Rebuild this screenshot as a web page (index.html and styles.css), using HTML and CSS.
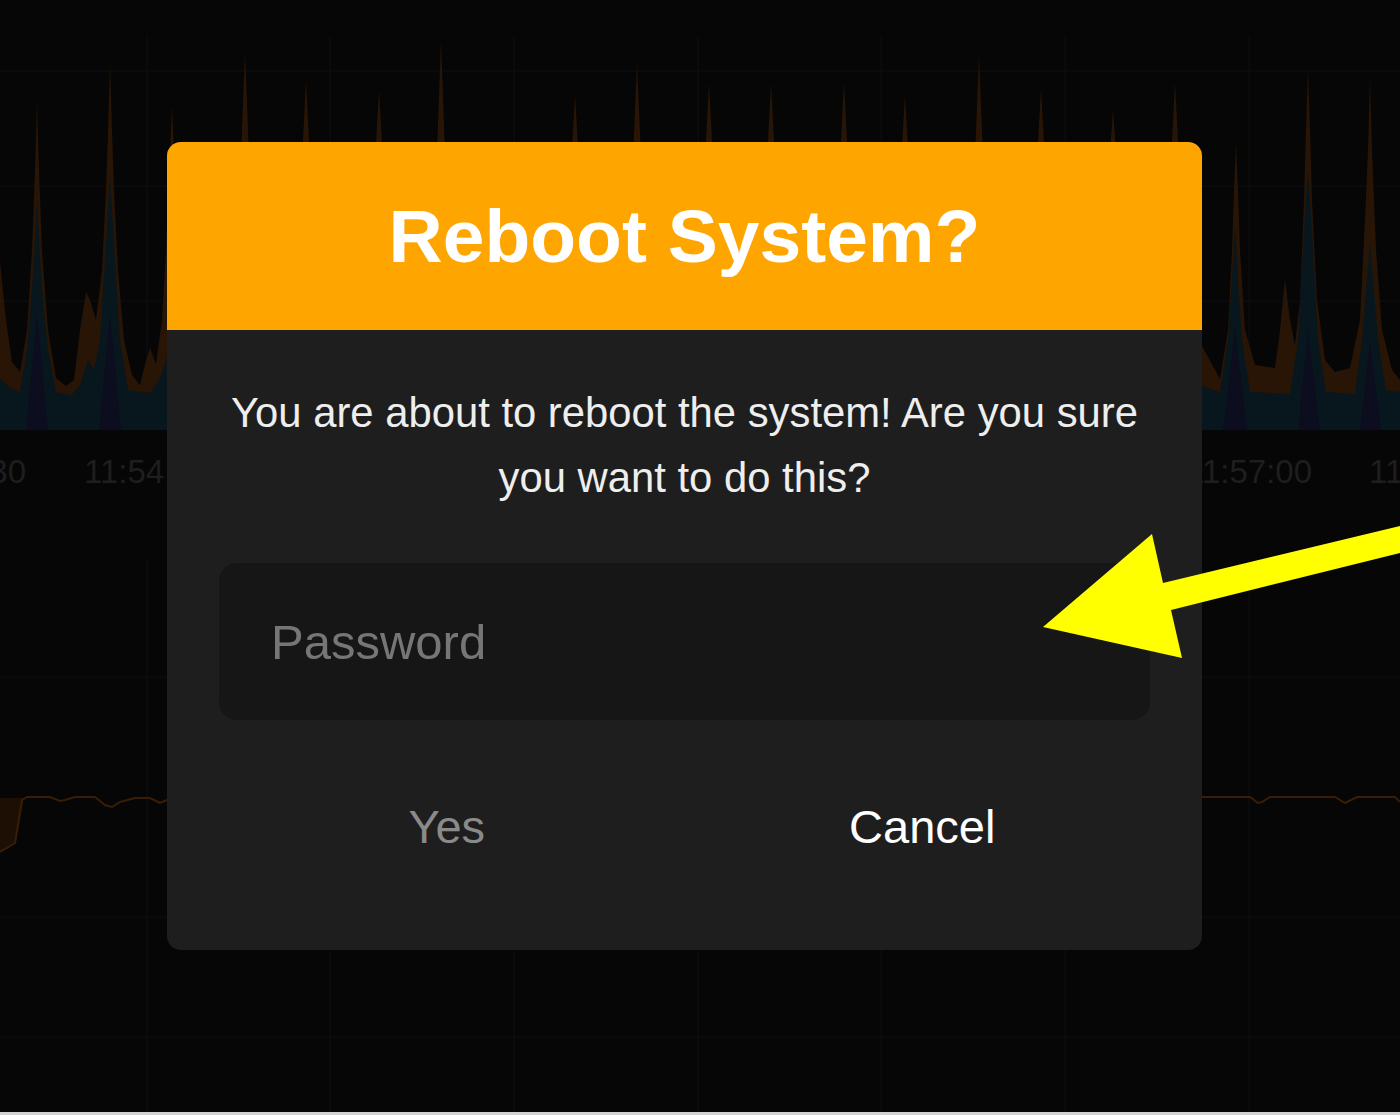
FILE: index.html
```html
<!DOCTYPE html>
<html lang="en">
<head>
    <meta charset="UTF-8">
    <meta name="viewport" content="width=device-width, initial-scale=1.0">
    <title>System | Reboot</title>
    <link rel="stylesheet" href="styles.css">
</head>
<body>
    <div class="dashboard">
        <!-- stacked load chart, dimmed behind the modal -->
        <svg class="chart chart-top" viewBox="0 0 1400 500">
            <g class="grid">
                <line x1="147" y1="36" x2="147" y2="430"/>
                <line x1="330" y1="36" x2="330" y2="430"/>
                <line x1="514" y1="36" x2="514" y2="430"/>
                <line x1="698" y1="36" x2="698" y2="430"/>
                <line x1="881" y1="36" x2="881" y2="430"/>
                <line x1="1065" y1="36" x2="1065" y2="430"/>
                <line x1="1249" y1="36" x2="1249" y2="430"/>
                <line x1="0" y1="71" x2="1400" y2="71"/>
                <line x1="0" y1="186" x2="1400" y2="186"/>
                <line x1="0" y1="301" x2="1400" y2="301"/>
            </g>
            <path class="area-cpu" d="M0,430 L0,262 L6,320 L12,362 L20,372 L27,330 L32,250 L35,170 L37,102 L39,170 L42,250 L48,330 L56,378 L66,386 L74,380 L80,330 L86,292 L90,300 L96,320 L102,270 L106,190 L108,130 L110,62 L112,130 L114,190 L118,270 L124,340 L132,375 L140,385 L146,360 L150,348 L156,364 L162,320 L166,250 L169,180 L172,104 L175,180 L178,260 L184,340 L195,370
                L229,370 L237,300 L240,180 L245,52 L250,180 L253,300 L261,370
                L290,370 L298,300 L301,180 L306,80 L311,180 L314,300 L322,370
                L363,370 L371,300 L374,180 L379,90 L384,180 L387,300 L395,370
                L425,370 L433,300 L436,180 L441,40 L446,180 L449,300 L457,370
                L559,370 L567,300 L570,180 L575,95 L580,180 L583,300 L591,370
                L621,370 L629,300 L632,180 L637,63 L642,180 L645,300 L653,370
                L693,370 L701,300 L704,180 L709,82 L714,180 L717,300 L725,370
                L755,370 L763,300 L766,180 L771,82 L776,180 L779,300 L787,370
                L828,370 L836,300 L839,180 L844,82 L849,180 L852,300 L860,370
                L889,370 L897,300 L900,180 L905,95 L910,180 L913,300 L921,370
                L963,370 L971,300 L974,180 L979,55 L984,180 L987,300 L995,370
                L1025,370 L1033,300 L1036,180 L1041,88 L1046,180 L1049,300 L1057,370
                L1097,370 L1105,300 L1108,180 L1113,110 L1118,180 L1121,300 L1129,370
                L1159,370 L1167,300 L1170,180 L1175,82 L1180,180 L1183,300 L1191,340
                L1202,346 L1220,379 L1228,330 L1232,250 L1234,190 L1236,143 L1238,190 L1240,250 L1245,330 L1255,365 L1275,368 L1280,330 L1285,279 L1290,320 L1295,345 L1300,300 L1304,200 L1306,130 L1308,67 L1310,130 L1312,200 L1317,300 L1325,360 L1335,372 L1350,368 L1360,320 L1365,220 L1368,150 L1370,77 L1372,150 L1376,250 L1382,330 L1392,370 L1400,380 L1400,430 Z"/>
            <path class="area-io" d="M0,430 L0,378 L10,388 L20,392 L27,350 L32,290 L35,240 L37,200 L39,240 L42,290 L48,350 L56,392 L72,395 L80,385 L88,360 L94,370 L100,340 L105,260 L108,210 L110,175 L112,210 L115,260 L120,340 L128,390 L150,393 L160,378 L166,360 L172,330 L180,380 L190,395
                L1202,386 L1220,392 L1228,340 L1232,280 L1235,225 L1238,280 L1242,340 L1250,392 L1290,394 L1298,340 L1303,250 L1306,200 L1308,171 L1310,200 L1313,250 L1318,340 L1326,392 L1355,394 L1362,340 L1366,290 L1370,243 L1374,290 L1378,340 L1386,390 L1400,392 L1400,430 Z"/>
            <path class="area-net" d="M26,430 L37,314 L48,430 Z M99,430 L110,314 L121,430 Z M1223,430 L1235,329 L1247,430 Z M1298,430 L1308,329 L1320,430 Z M1360,430 L1370,343 L1381,430 Z"/>
            <g class="axis">
                <text x="-37" y="483">11:53:30</text>
                <text x="147" y="483">11:54:00</text>
                <text x="1249" y="483">11:57:00</text>
                <text x="1432" y="483">11:57:30</text>
            </g>
        </svg>

        <!-- memory chart -->
        <svg class="chart chart-bottom" viewBox="0 500 1400 612">
            <g class="grid">
                <line x1="147" y1="560" x2="147" y2="1112"/>
                <line x1="330" y1="560" x2="330" y2="1112"/>
                <line x1="514" y1="560" x2="514" y2="1112"/>
                <line x1="698" y1="560" x2="698" y2="1112"/>
                <line x1="881" y1="560" x2="881" y2="1112"/>
                <line x1="1065" y1="560" x2="1065" y2="1112"/>
                <line x1="1249" y1="560" x2="1249" y2="1112"/>
                <line x1="0" y1="677" x2="1400" y2="677"/>
                <line x1="0" y1="917" x2="1400" y2="917"/>
                <line x1="0" y1="1037" x2="1400" y2="1037"/>
            </g>
            <path class="mem-fill" d="M0,798 L24,798 L16,843 L0,852 Z"/>
            <polyline class="mem-line" points="0,852 15,843 22,800 27,797 50,797 60,801 65,800 75,797 95,797 105,805 112,807 120,802 135,798 150,798 160,803 167,800 1202,797 1250,797 1258,803 1262,802 1270,797 1335,797 1345,803 1357,797 1395,797 1400,802"/>
        </svg>
        <div class="page-edge"></div>
    </div>

    <div class="modal-backdrop">
        <div class="modal">
            <div class="modal-header">
                <h1>Reboot System?</h1>
            </div>
            <div class="modal-body">
                <p class="modal-message">You are about to reboot the system! Are you sure you want to do this?</p>
                <input type="password" class="password-input" placeholder="Password">
                <div class="modal-actions">
                    <button class="btn-confirm" disabled>Yes</button>
                    <button class="btn-cancel">Cancel</button>
                </div>
            </div>
        </div>
    </div>

    <svg class="annotation" viewBox="0 0 1400 1115">
        <polygon points="1043,627 1152,534 1163,583 1400,526 1400,553 1171,610 1182,658"/>
    </svg>
</body>
</html>
```

FILE: styles.css
```css
html, body {
    margin: 0;
    padding: 0;
}
body {
    width: 1400px;
    height: 1115px;
    overflow: hidden;
    position: relative;
    background-color: #060606;
    font-family: "Liberation Sans", Arial, sans-serif;
}
.dashboard {
    display: flex;
    flex-direction: column;
}
.chart {
    display: block;
    width: 1400px;
}
.chart-top {
    height: 500px;
}
.chart-bottom {
    height: 612px;
}
.grid line {
    stroke: #0a0c10;
    stroke-width: 1.5;
}
.area-cpu {
    fill: #281506;
}
.area-io {
    fill: #08171d;
}
.area-net {
    fill: #0c0d1f;
}
.axis text {
    fill: #1e1e1e;
    font-family: "Liberation Sans", Arial, sans-serif;
    font-size: 33px;
    text-anchor: middle;
}
.mem-fill {
    fill: #1d0f04;
}
.mem-line {
    fill: none;
    stroke: #3a1d05;
    stroke-width: 2;
}
.page-edge {
    height: 3px;
    background-color: #d2d2d2;
}
.modal-backdrop {
    position: absolute;
    top: 0;
    left: 0;
    right: 0;
    bottom: 0;
    display: flex;
    align-items: flex-start;
    padding: 142px 0 0 167px;
    box-sizing: border-box;
}
.modal {
    width: 1035px;
    background-color: #1e1e1e;
    border-radius: 14px;
    overflow: hidden;
}
.modal-header {
    height: 188px;
    background-color: #ffa500;
    display: flex;
    align-items: center;
    justify-content: center;
}
.modal-header h1 {
    margin: 0;
    font-size: 75px;
    font-weight: bold;
    color: #fff;
}
.modal-body {
    padding: 50px 52px 74px;
}
.modal-message {
    margin: 0;
    font-size: 41.8px;
    line-height: 65px;
    color: #eeeeee;
    text-align: center;
}
.password-input {
    display: block;
    width: 100%;
    height: 157px;
    margin-top: 53px;
    padding: 0 52px;
    box-sizing: border-box;
    border: none;
    border-radius: 18px;
    background-color: #161616;
    font-family: inherit;
    font-size: 49px;
    color: #fff;
    outline: none;
}
.password-input::placeholder {
    color: #767676;
}
.modal-actions {
    display: flex;
    margin: 56px -10px 0;
}
.modal-actions button {
    flex: 1;
    height: 100px;
    padding: 0;
    border: none;
    background: none;
    font-family: inherit;
    font-size: 47px;
    color: #fff;
    cursor: pointer;
}
.modal-actions .btn-confirm:disabled {
    color: #8a8a8a;
    cursor: default;
}
.annotation {
    position: absolute;
    top: 0;
    left: 0;
    width: 1400px;
    height: 1115px;
    pointer-events: none;
}
.annotation polygon {
    fill: #ffff00;
}
```
